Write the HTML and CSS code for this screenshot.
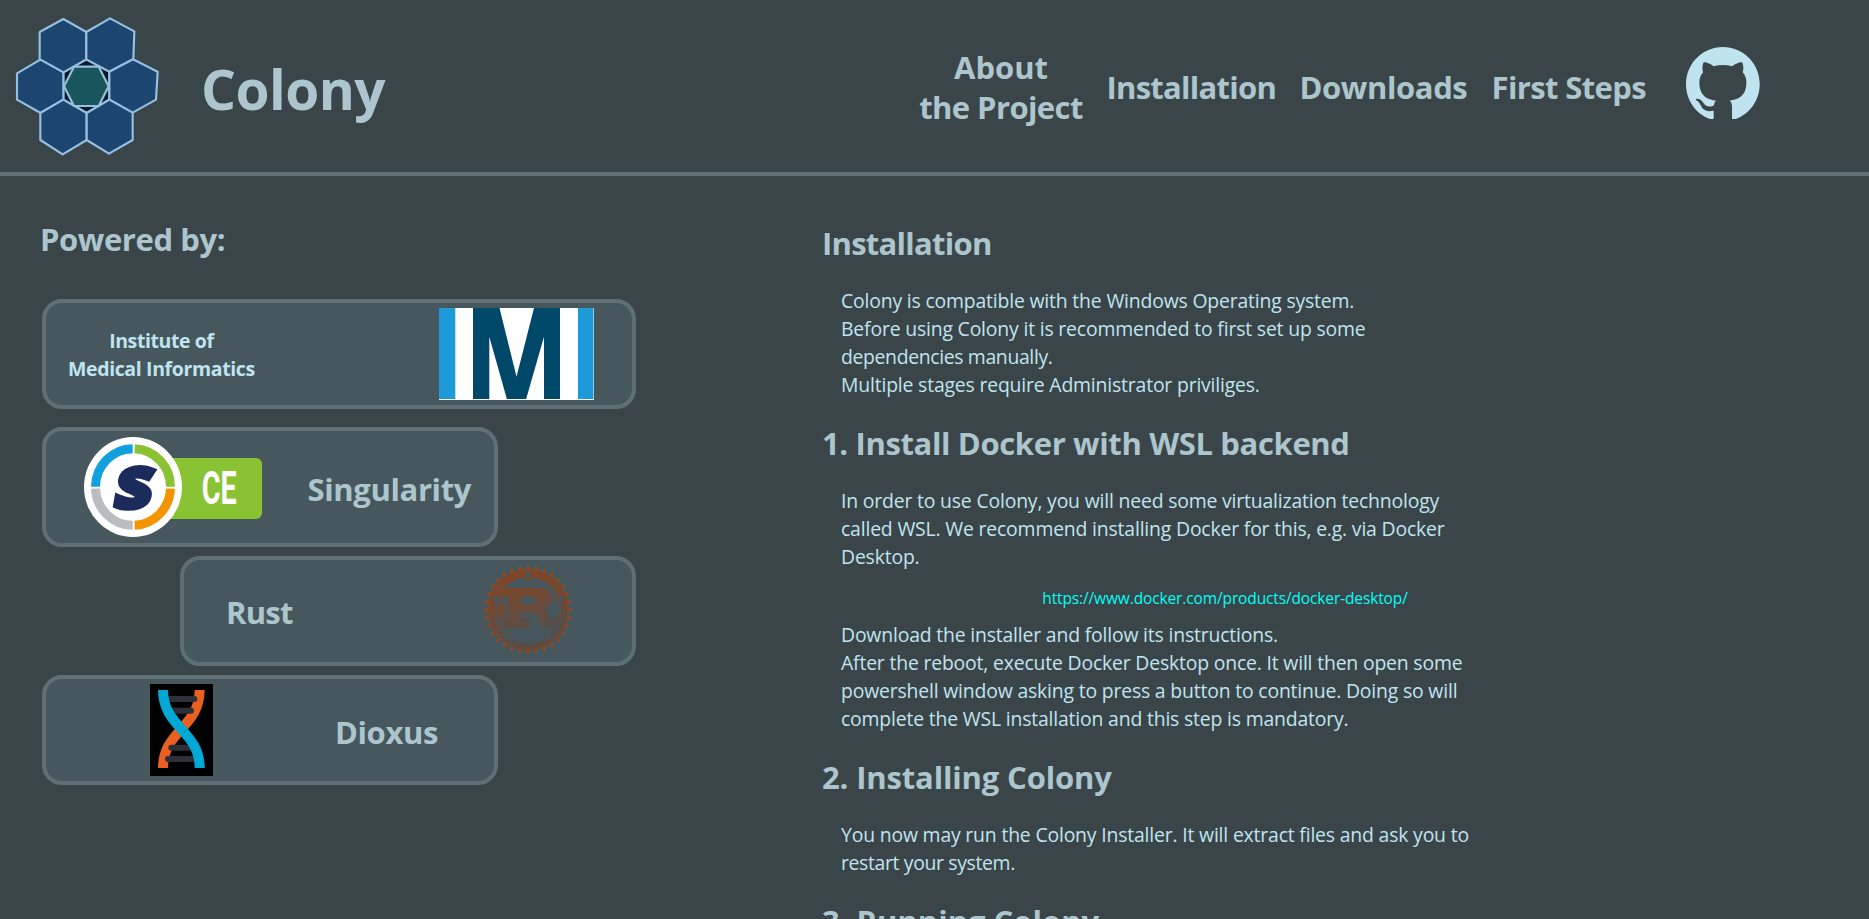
FILE: index.html
```html
<!DOCTYPE html>
<html lang="en">
<head>
<meta charset="utf-8">
<title>Colony</title>
<link rel="stylesheet" href="styles.css">
</head>
<body>
<header class="topbar">
  <div class="brand">
    <svg class="brand-logo" viewBox="45 48 432 420" aria-hidden="true">
      <g stroke="#97bfe2" stroke-width="6.5" stroke-linejoin="round" fill="#1c466f">
        <polygon fill="#0b1a29" points="259,178 328,215 328,299 260,339 190,299 190,217"/>
        <polygon points="190,57 259,96 259,178 190,217 119,178 119,96"/>
        <polygon points="330,55 403,94 400,178 328,215 259,178 259,96"/>
        <polygon points="121,179 190,217 190,299 122,339 51,299 51,220"/>
        <polygon points="399,178 473,215 468,299 398,338 328,299 328,215"/>
        <polygon points="190,299 260,339 260,420 188,463 121,420 121,339"/>
        <polygon points="328,299 398,338 398,420 327,461 260,420 260,339"/>
        <polygon fill="#18565b" points="222,200 296,200 326,259 296,318 222,318 192,259"/>
      </g>
    </svg>
    <h1 class="brand-name">Colony</h1>
  </div>
  <nav class="nav">
    <a class="nav-about"><span class="ls-about">About</span><br><span class="ls-project">the Project</span></a>
    <a class="ls-install">Installation</a>
    <a class="ls-down">Downloads</a>
    <a class="ls-steps">First Steps</a>
    <a class="nav-github">
      <svg viewBox="0 0 98 96" aria-label="GitHub"><path fill="#c0e4ef" d="M48.854 0C21.839 0 0 22 0 49.217c0 21.756 13.993 40.172 33.405 46.69 2.427.49 3.316-1.059 3.316-2.362 0-1.141-.08-5.052-.08-9.127-13.59 2.934-16.42-5.867-16.42-5.867-2.184-5.704-5.42-7.17-5.42-7.17-4.448-3.015.324-3.015.324-3.015 4.934.326 7.523 5.052 7.523 5.052 4.367 7.496 11.404 5.378 14.235 4.074.404-3.178 1.699-5.378 3.074-6.6-10.839-1.141-22.243-5.378-22.243-24.283 0-5.378 1.94-9.778 5.014-13.2-.485-1.222-2.184-6.275.486-13.038 0 0 4.125-1.304 13.426 5.052a46.97 46.97 0 0 1 12.214-1.63c4.125 0 8.33.571 12.213 1.63 9.302-6.356 13.427-5.052 13.427-5.052 2.67 6.763.97 11.816.485 13.038 3.155 3.422 5.015 7.822 5.015 13.2 0 18.905-11.404 23.06-22.324 24.283 1.78 1.548 3.316 4.481 3.316 9.126 0 6.6-.08 11.897-.08 13.526 0 1.304.89 2.853 3.316 2.364 19.412-6.52 33.405-24.935 33.405-46.691C97.707 22 75.788 0 48.854 0z"/></svg>
    </a>
  </nav>
</header>

<main class="page">
  <aside class="powered">
    <h2 class="heading ls-powered">Powered by:</h2>
    <div class="card card-imi">
      <p class="imi-name"><span class="ls-inst">Institute of</span><br>Medical Informatics</p>
      <svg class="imi-logo" viewBox="0 0 155 92" aria-hidden="true">
        <rect width="155" height="92" fill="#fff"/>
        <rect width="16.3" height="91" fill="#1c9ad9"/>
        <rect x="139" width="15.5" height="91" fill="#1c9ad9"/>
        <rect x="34" width="87" height="91" fill="#004869"/>
        <path fill="#fff" d="M60.5 0L77.5 68.7L95 0zM50.3 91.5V28.7L68 91.5zM105 91.5V28.7L87 91.5z"/>
      </svg>
    </div>
    <div class="card card-singularity">
      <svg class="singularity-logo" viewBox="0 0 534 300" aria-hidden="true">
        <rect x="180" y="63" width="354" height="183" rx="18" fill="#89c233"/>
        <ellipse cx="147" cy="150" rx="147" ry="150" fill="#fff"/>
        <g fill="none" stroke-width="27">
          <path stroke="#129fde" d="M34.5 149A112.500 115 0 0 1 146 35"/>
          <path stroke="#89c233" d="M152 35A112.500 115 0 0 1 259.500 149"/>
          <path stroke="#f49400" d="M259.500 155A112.500 115 0 0 1 152 265"/>
          <path stroke="#bbbcc0" d="M146 265A112.500 115 0 0 1 34.5 155"/>
        </g>
        <text class="mark-s" transform="translate(89 209) skewX(-10)" textLength="104" lengthAdjust="spacingAndGlyphs">S</text>
        <text class="mark-ce" transform="translate(353 201) scale(.63 1)">CE</text>
      </svg>
      <h2 class="heading ls-sing">Singularity</h2>
    </div>
    <div class="card card-rust">
      <h2 class="heading ls-rust">Rust</h2>
      <svg class="rust-logo" viewBox="22 18 270 270" aria-hidden="true">
        <defs>
          <linearGradient id="rust" x1="0.25" y1="0" x2="0.5" y2="1">
            <stop offset="0" stop-color="#8c4421"/><stop offset=".45" stop-color="#6d4935"/><stop offset=".8" stop-color="#505050"/><stop offset="1" stop-color="#5b4a3f"/>
          </linearGradient>
          <radialGradient id="rim" cx="157" cy="153" r="135" gradientUnits="userSpaceOnUse">
            <stop offset=".8" stop-color="#97481f" stop-opacity="0"/><stop offset=".92" stop-color="#97481f" stop-opacity=".6"/><stop offset="1" stop-color="#a0542a"/>
          </radialGradient>
          <path id="t1" d="M147 36L155 20Q157 18 159 20L167 36z"/>
          <g id="t2"><use href="#t1"/><use href="#t1" transform="rotate(11.25 157 153)"/></g>
          <g id="t4"><use href="#t2"/><use href="#t2" transform="rotate(22.5 157 153)"/></g>
          <g id="t8"><use href="#t4"/><use href="#t4" transform="rotate(45 157 153)"/></g>
          <g id="t16"><use href="#t8"/><use href="#t8" transform="rotate(90 157 153)"/></g>
          <mask id="gear" maskUnits="userSpaceOnUse" x="15" y="10" width="285" height="285">
            <g fill="#fff">
              <use href="#t16"/><use href="#t16" transform="rotate(180 157 153)"/>
              <circle cx="157" cy="153" r="109" fill="none" stroke="#fff" stroke-width="22"/>
              <path d="M138 50H176L157 69zM50 104L82 112L74 130L50 140zM264 104L232 112L240 130L264 140zM80 242L88 219H108L112 246zM234 242L226 219H206L202 246z"/>
              <path d="M58 145V177H92V130z"/>
              <path fill-rule="evenodd" d="M76 86H192Q226 87 227 119Q226 140 207 152Q222 158 222 172Q224 182 233 181Q240 179 239 162H258V195H246L230 209H208Q190 208 186 182Q182 165 170 162H135V177H161V209H76V177H99V115H76zM135 113V135H172Q181 133 181 124Q181 115 172 113z"/>
            </g>
            <g fill="#000"><circle cx="157" cy="49" r="9"/><circle cx="62" cy="121" r="9"/><circle cx="253" cy="121" r="9"/><circle cx="98" cy="234" r="9"/><circle cx="217" cy="234" r="9"/></g>
          </mask>
        </defs>
        <g mask="url(#gear)">
          <rect x="15" y="10" width="285" height="285" fill="url(#rust)"/>
          <rect x="15" y="10" width="285" height="285" fill="url(#rim)"/>
          <circle cx="157" cy="153" r="115" fill="none" stroke="#6a4431" stroke-width="2"/>
        </g>
      </svg>
    </div>
    <div class="card card-dioxus">
      <svg class="dioxus-logo" viewBox="0 0 189 276" aria-hidden="true">
        <rect width="189" height="276" fill="#000"/>
        <g fill="none" stroke-width="30">
          <path stroke="#e96020" d="M149 18C149 130 39 140 39 252"/>
          <g stroke="#2d303b" stroke-width="18" stroke-linecap="round"><path d="M58 45H133M68 80H123M64 191H125M54 225H128"/></g>
          <path stroke="#00a8d6" d="M39 18C39 130 149 140 149 252"/>
        </g>
      </svg>
      <h2 class="heading ls-diox">Dioxus</h2>
    </div>
  </aside>

  <article class="guide">
    <h2 class="heading ls-install">Installation</h2>
    <p class="text">Colony is compatible with the Windows Operating system.<br>Before using Colony it is recommended to first set up some<br><span class="tight">dependencies manually.</span><br>Multiple stages require Administrator priviliges.</p>
    <h2 class="heading ls-one">1. Install Docker with WSL backend</h2>
    <p class="text">In order to use Colony, you will need some virtualization technology<br>called WSL. We recommend installing Docker for this, e.g. via Docker<br>Desktop.</p>
    <a class="link">https://www.docker.com/products/docker-desktop/</a>
    <p class="text">Download the installer and follow its instructions.<br>After the reboot, execute Docker Desktop once. It will then open some<br>powershell window asking to press a button to continue. Doing so will<br>complete the WSL installation and this step is mandatory.</p>
    <h2 class="heading ls-two">2. Installing Colony</h2>
    <p class="text">You now may run the Colony Installer. It will extract files and ask you to<br><span class="tight">restart your system.</span></p>
    <h2 class="heading ls-three">3. Running Colony</h2>
  </article>
</main>
</body>
</html>
```
FILE: styles.css
```css
* { box-sizing: border-box; }
body {
  margin: 0;
  height: 919px;
  overflow: hidden;
  background: #3a4549;
  color: #c0e4ef;
  font-family: "Open Sans", "Noto Sans", sans-serif;
}
h1, h2, p { margin: 0; }
svg { display: block; }

.topbar {
  display: flex;
  justify-content: space-between;
  height: 176px;
  border-bottom: 4px solid #5f6f74;
}
.brand {
  display: flex;
  align-items: center;
  gap: 42px;
  padding: 0 0 0 15px;
}
.brand-logo { width: 144px; height: 140px; }
.brand-name {
  padding-top: 5px;
  color: #adc5cd;
  font-size: 55px;
  line-height: 76px;
  letter-spacing: -0.57px;
}
.nav {
  display: grid;
  grid-template-columns: 187.5px 193px 192px 194.5px 74px;
  align-items: center;
  padding: 2px 109px 0 0;
  color: #adc5cd;
  font-size: 31px;
  font-weight: 700;
  line-height: 40px;
  white-space: nowrap;
}
.nav-about { width: 164px; text-align: center; }
.nav-github { padding-bottom: 8px; }
.nav-github svg { width: 74px; height: 72.5px; }

.page { display: flex; }
.powered {
  display: flex;
  flex-direction: column;
  width: 636px;
  padding: 43px 0 0 40px;
}
.heading {
  color: #adc5cd;
  font-size: 31px;
  font-weight: 700;
  line-height: 40px;
  white-space: nowrap;
}
.card {
  display: flex;
  align-items: center;
  width: 456px;
  height: 110px;
  margin: 0 0 9px 2px;
  border: 4px solid #5f6f74;
  border-radius: 20px;
  background: #46585d;
}
.card-imi {
  justify-content: space-between;
  width: 594px;
  margin-top: 40px;
  margin-bottom: 18px;
  padding: 0 38px 0 22px;
}
.imi-name {
  padding-top: 2px;
  font-size: 19.5px;
  font-weight: 700;
  line-height: 28px;
  letter-spacing: -0.37px;
  text-align: center;
}
.imi-logo { width: 155px; height: 92px; }
.card-singularity {
  justify-content: space-between;
  height: 120px;
  padding: 0 23px 0 38px;
}
.card-singularity .heading { padding-top: 4px; }
.singularity-logo { width: 178px; height: 100px; }
.mark-s {
  fill: #1b2c5c;
  stroke: #1b2c5c;
  stroke-width: 20px;
  font: 700 160px "Open Sans", sans-serif;
}
.mark-ce {
  fill: #fff;
  font: 700 137px "Roboto", sans-serif;
}
.card-rust {
  justify-content: space-between;
  align-self: flex-end;
  padding: 0 59px 2px 42px;
}
.card-rust .heading { padding-top: 4px; }
.card-dioxus .heading { padding-top: 4px; }
.rust-logo { width: 90px; height: 90px; }
.card-dioxus {
  justify-content: space-between;
  padding: 0 56px 0 104px;
}
.dioxus-logo { width: 63px; height: 92px; }

.guide {
  width: 806px;
  margin-left: 186px;
  padding-top: 47px;
}
.text {
  margin: 24px 0 24px 19px;
  font-size: 19.4px;
  line-height: 28px;
  letter-spacing: -0.18px;
  white-space: nowrap;
}
.link {
  display: block;
  margin: -8px 0 -12px;
  color: #00fff6;
  font-size: 15.5px;
  line-height: 22px;
  letter-spacing: -0.13px;
  text-align: center;
}
.tight { letter-spacing: -0.35px; }
.ls-about { letter-spacing: -0.05px; }
.ls-project { letter-spacing: -0.6px; }
.ls-install { letter-spacing: -0.73px; }
.ls-down { letter-spacing: -0.4px; }
.ls-steps { letter-spacing: -0.62px; }
.ls-powered { letter-spacing: -0.41px; }
.ls-inst { letter-spacing: -0.4px; }
.ls-sing { letter-spacing: -0.38px; }
.ls-rust { letter-spacing: -0.74px; }
.ls-diox { letter-spacing: -0.38px; }
.ls-one { letter-spacing: -0.36px; }
.ls-two { letter-spacing: -0.15px; }
.ls-three { letter-spacing: 0; }
```
